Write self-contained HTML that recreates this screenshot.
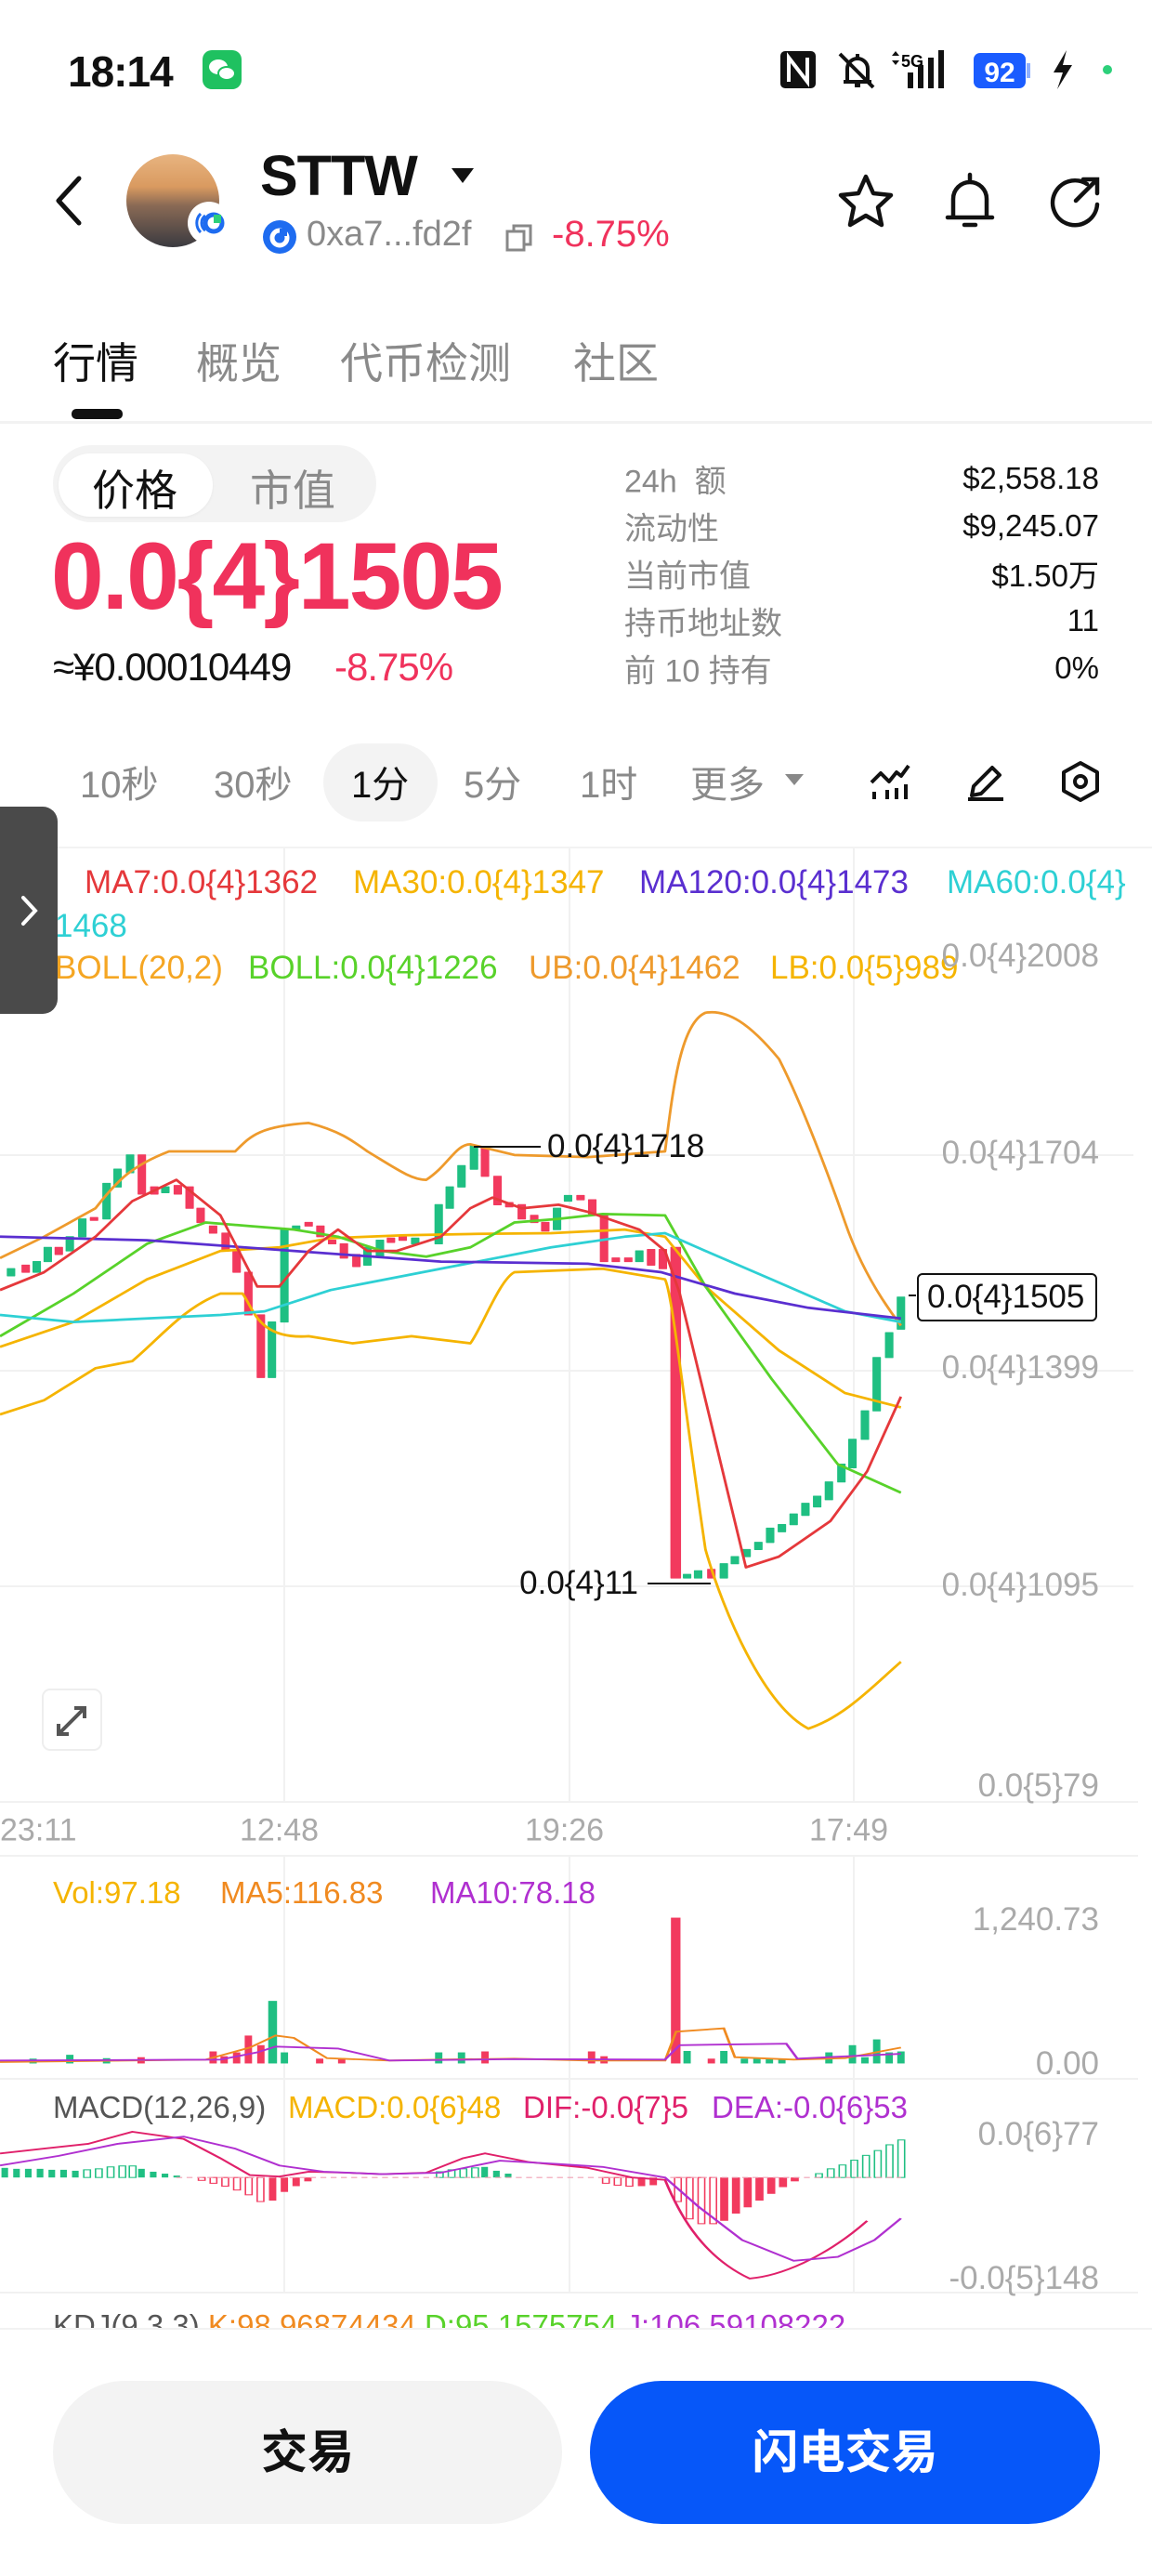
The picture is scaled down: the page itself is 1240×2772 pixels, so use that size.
<!DOCTYPE html>
<html><head><meta charset="utf-8">
<style>
*{margin:0;padding:0;box-sizing:border-box}
html,body{width:1240px;height:2772px;background:#fff;overflow:hidden}
body{position:relative;font-family:"Liberation Sans","Noto Sans CJK SC",sans-serif;color:#111}
.a{position:absolute;white-space:nowrap}
.g{color:#8a8a8a}
.red{color:#f0325c}
.lbl{position:absolute;left:672px;font-size:34px;color:#8a8a8a;transform:translateY(-50%)}
.val{position:absolute;right:57px;font-size:33px;color:#111;transform:translateY(-50%)}
.tf{position:absolute;top:841px;transform:translateY(-50%);font-size:40px;color:#8a8a8a}
.ax{position:absolute;right:57px;font-size:35px;color:#aaa;transform:translateY(-50%)}
.lg{position:absolute;font-size:35px;transform:translateY(-50%)}
.sm{font-size:33px}
</style></head><body>

<!-- status bar -->
<div class="a" style="left:73px;top:50px;font-size:46px;font-weight:bold;letter-spacing:-1px">18:14</div>
<div class="a" style="left:218px;top:54px;width:42px;height:42px;border-radius:10px;background:#1fc160">
<svg width="42" height="42" viewBox="0 0 42 42"><ellipse cx="17" cy="18" rx="10" ry="8" fill="#fff"/><ellipse cx="26" cy="25" rx="9" ry="7" fill="#fff" stroke="#1fc160" stroke-width="2"/></svg></div>
<svg class="a" style="left:830px;top:50px" width="380" height="50" viewBox="0 0 380 50">
<rect x="10" y="5" width="38" height="40" rx="5" fill="#111"/><path d="M19 38V12l20 26V12" stroke="#fff" stroke-width="4" fill="none"/>
<path d="M78 38h30M82 38V24a11 11 0 0 1 22 0v14M93 8v4M90 42h6" stroke="#111" stroke-width="4" fill="none"/><path d="M74 8l36 36" stroke="#111" stroke-width="4"/>
<text x="140" y="22" font-size="18" font-weight="bold" font-family="Liberation Sans">5G</text><path d="M130 10l4-5 4 5M130 15l4 5 4-5" fill="#111"/>
<rect x="147" y="28" width="6" height="17" fill="#111"/><rect x="158" y="20" width="6" height="25" fill="#111"/><rect x="169" y="12" width="6" height="33" fill="#111"/><rect x="180" y="4" width="6" height="41" fill="#111"/>
<rect x="218" y="7" width="56" height="38" rx="7" fill="#1a5cff"/><rect x="275" y="18" width="4" height="16" fill="#8fb0ff"/>
<text x="246" y="38" font-size="30" font-weight="bold" fill="#fff" text-anchor="middle" font-family="Liberation Sans">92</text>
<path d="M318 4l-14 24h10l-6 18 16-26h-10z" fill="#111"/>
<circle cx="362" cy="25" r="5" fill="#2dd07a"/></svg>

<!-- header -->
<svg class="a" style="left:55px;top:188px" width="40" height="56" viewBox="0 0 40 56"><path d="M30 4L8 28l22 24" stroke="#111" stroke-width="5" fill="none" stroke-linecap="round" stroke-linejoin="round"/></svg>
<div class="a" style="left:136px;top:166px;width:100px;height:100px;border-radius:50%;background:linear-gradient(#e8b480 0%,#d99a60 35%,#8a6a55 55%,#3a3a40 100%)"></div>
<div class="a" style="left:202px;top:217px;width:46px;height:46px;border-radius:50%;background:#fff"><svg width="46" height="46" viewBox="0 0 46 46"><path d="M14 13a14 14 0 0 0 0 20M19 15a10 10 0 0 0 0 16" stroke="#1e6cf0" stroke-width="3" fill="none"/><circle cx="28" cy="23" r="9" fill="none" stroke="#1e6cf0" stroke-width="5"/><rect x="28" y="14" width="8" height="9" fill="#2dd07a"/></svg></div>
<div class="a" style="left:280px;top:154px;font-size:61px;font-weight:bold;letter-spacing:-1px">STTW</div>
<svg class="a" style="left:486px;top:181px" width="24" height="18"><path d="M0 0h24L12 16z" fill="#111"/></svg>
<svg class="a" style="left:282px;top:236px" width="38" height="38"><circle cx="19" cy="19" r="18" fill="#1e6cf0"/><circle cx="19" cy="20" r="8" fill="none" stroke="#fff" stroke-width="5"/><rect x="19" y="10" width="8" height="8" fill="#1e6cf0"/></svg>
<div class="a g" style="left:330px;top:231px;font-size:38px">0xa7...fd2f</div>
<svg class="a" style="left:543px;top:240px" width="32" height="32"><rect x="3" y="9" width="18" height="20" fill="none" stroke="#888" stroke-width="3"/><path d="M10 9V3h18v20h-7" fill="none" stroke="#888" stroke-width="3"/></svg>
<div class="a red" style="left:594px;top:230px;font-size:40px">-8.75%</div>
<svg class="a" style="left:900px;top:186px" width="64" height="60" viewBox="0 0 64 60"><path d="M32 4l8 18 19 2-14 13 4 19-17-10-17 10 4-19L5 24l19-2z" fill="none" stroke="#111" stroke-width="4.5" stroke-linejoin="round"/></svg>
<svg class="a" style="left:1014px;top:184px" width="60" height="64" viewBox="0 0 60 64"><path d="M6 50h48M12 50V30a18 18 0 0 1 36 0v20M30 4v8M24 58h12" stroke="#111" stroke-width="4.5" fill="none" stroke-linecap="round"/></svg>
<svg class="a" style="left:1128px;top:188px" width="58" height="58" viewBox="0 0 58 58"><path d="M42 10A24 24 0 1 0 53 32" stroke="#111" stroke-width="4.5" fill="none" stroke-linecap="round"/><path d="M30 28L52 6M38 5h15v15" stroke="#111" stroke-width="4.5" fill="none" stroke-linecap="round"/></svg>

<!-- tabs -->
<div class="a" style="left:57px;top:355px;font-size:46px;color:#111">行情</div>
<div class="a g" style="left:211px;top:355px;font-size:46px">概览</div>
<div class="a g" style="left:366px;top:355px;font-size:46px">代币检测</div>
<div class="a g" style="left:617px;top:355px;font-size:46px">社区</div>
<div class="a" style="left:77px;top:440px;width:55px;height:11px;border-radius:5px;background:#111"></div>
<div class="a" style="left:0;top:453px;width:1240px;height:3px;background:#f2f2f2"></div>

<!-- price block -->
<div class="a" style="left:57px;top:479px;width:348px;height:83px;border-radius:42px;background:#f3f3f3"></div>
<div class="a" style="left:63px;top:488px;width:166px;height:68px;border-radius:34px;background:#fff;box-shadow:0 1px 3px rgba(0,0,0,.05)"></div>
<div class="a" style="left:99px;top:492px;font-size:46px;color:#111">价格</div>
<div class="a g" style="left:269px;top:492px;font-size:46px">市值</div>
<div class="a red" style="left:55px;top:562px;font-size:102px;font-weight:bold;letter-spacing:-2px">0.0{4}1505</div>
<div class="a" style="left:57px;top:694px;font-size:42px;letter-spacing:-1px">≈¥0.00010449</div>
<div class="a red" style="left:360px;top:694px;font-size:42px;letter-spacing:-1px">-8.75%</div>

<div class="lbl" style="top:515px">24h&nbsp; 额</div><div class="val" style="top:515px">$2,558.18</div>
<div class="lbl" style="top:566px">流动性</div><div class="val" style="top:566px">$9,245.07</div>
<div class="lbl" style="top:617px">当前市值</div><div class="val" style="top:617px">$1.50万</div>
<div class="lbl" style="top:668px">持币地址数</div><div class="val" style="top:668px">11</div>
<div class="lbl" style="top:719px">前 10 持有</div><div class="val" style="top:719px">0%</div>

<!-- timeframes -->
<div class="a" style="left:348px;top:800px;width:123px;height:84px;border-radius:42px;background:#f3f3f3"></div>
<div class="tf" style="left:86px">10秒</div>
<div class="tf" style="left:230px">30秒</div>
<div class="tf" style="left:378px;color:#111">1分</div>
<div class="tf" style="left:499px">5分</div>
<div class="tf" style="left:624px">1时</div>
<div class="tf" style="left:743px">更多</div>
<svg class="a" style="left:845px;top:833px" width="20" height="14"><path d="M0 0h20L10 12z" fill="#888"/></svg>
<svg class="a" style="left:935px;top:818px" width="46" height="46" viewBox="0 0 46 46"><path d="M3 24l10-10 9 9 8-10 5 4 8-11" stroke="#111" stroke-width="4" fill="none" stroke-linejoin="round"/><path d="M6 42v-8M20 42V32M30 42V30M40 42V26" stroke="#111" stroke-width="4"/></svg>
<svg class="a" style="left:1038px;top:818px" width="46" height="46" viewBox="0 0 46 46"><path d="M8 38l2-10 20-20 8 8-20 20zM4 42h38" stroke="#111" stroke-width="4" fill="none" stroke-linejoin="round"/></svg>
<svg class="a" style="left:1140px;top:818px" width="46" height="46" viewBox="0 0 46 46"><path d="M23 3l18 10v20L23 43 5 33V13z" stroke="#111" stroke-width="4" fill="none" stroke-linejoin="round"/><circle cx="23" cy="23" r="6" stroke="#111" stroke-width="4" fill="none"/></svg>

<div class="a" style="left:0;top:911px;width:1240px;height:2px;background:#f3f3f3"></div>

<!-- chart grid & lines -->
<svg class="a" style="left:0;top:0" width="1240" height="2772">
<g stroke="#f1f1f1" stroke-width="2">
<line x1="0" y1="1243" x2="1220" y2="1243"/><line x1="0" y1="1475" x2="1220" y2="1475"/><line x1="0" y1="1707" x2="1220" y2="1707"/>
<line x1="0" y1="1939" x2="1225" y2="1939"/><line x1="0" y1="1997" x2="1225" y2="1997"/><line x1="0" y1="2237" x2="1225" y2="2237"/><line x1="0" y1="2467" x2="1225" y2="2467"/>
<line x1="306" y1="913" x2="306" y2="1939"/><line x1="613" y1="913" x2="613" y2="1939"/><line x1="919" y1="913" x2="919" y2="1939"/>
<line x1="306" y1="1997" x2="306" y2="2467"/><line x1="613" y1="1997" x2="613" y2="2467"/><line x1="919" y1="1997" x2="919" y2="2467"/>
</g>
<g transform="matrix(0.791 0 0 0.765 0 780)" fill="none" stroke-width="3.6" stroke-linejoin="round">
<g stroke-width="1.5">
<g fill="#1fbf82" stroke="#1fbf82">
<rect x="10" y="765" width="10" height="10"/><rect x="45" y="755" width="10" height="15"/><rect x="60" y="735" width="10" height="20"/><rect x="90" y="720" width="10" height="20"/><rect x="107" y="695" width="10" height="25"/><rect x="140" y="645" width="10" height="50"/><rect x="155" y="625" width="10" height="25"/><rect x="172" y="605" width="10" height="25"/><rect x="220" y="650" width="10" height="8"/><rect x="365" y="840" width="10" height="78"/><rect x="382" y="710" width="10" height="130"/><rect x="398" y="705" width="10" height="5"/><rect x="495" y="735" width="10" height="25"/><rect x="512" y="725" width="10" height="23"/><rect x="560" y="722" width="10" height="8"/><rect x="592" y="675" width="10" height="55"/><rect x="607" y="650" width="10" height="30"/><rect x="623" y="620" width="10" height="30"/><rect x="640" y="592" width="10" height="33"/><rect x="753" y="680" width="10" height="30"/><rect x="768" y="662" width="10" height="8"/><rect x="865" y="740" width="10" height="15"/>
<rect x="930" y="1195" width="10" height="5"/><rect x="945" y="1190" width="10" height="10"/><rect x="980" y="1180" width="10" height="20"/><rect x="995" y="1170" width="10" height="10"/><rect x="1011" y="1160" width="10" height="10"/><rect x="1027" y="1150" width="10" height="10"/><rect x="1043" y="1130" width="10" height="20"/><rect x="1059" y="1125" width="10" height="10"/><rect x="1075" y="1110" width="10" height="15"/><rect x="1091" y="1095" width="10" height="17"/><rect x="1107" y="1085" width="10" height="15"/><rect x="1123" y="1065" width="10" height="25"/><rect x="1140" y="1040" width="10" height="25"/><rect x="1155" y="1005" width="10" height="40"/><rect x="1172" y="965" width="10" height="40"/><rect x="1188" y="890" width="10" height="75"/><rect x="1205" y="855" width="10" height="35"/><rect x="1221" y="805" width="10" height="45"/>
</g>
<g fill="#f23a5e" stroke="#f23a5e">
<rect x="30" y="760" width="10" height="10"/><rect x="75" y="735" width="10" height="10"/><rect x="123" y="693" width="10" height="4"/><rect x="188" y="605" width="10" height="55"/><rect x="205" y="650" width="10" height="10"/><rect x="237" y="648" width="10" height="12"/><rect x="253" y="650" width="10" height="30"/><rect x="268" y="680" width="10" height="20"/><rect x="285" y="705" width="10" height="10"/><rect x="302" y="715" width="10" height="25"/><rect x="317" y="740" width="10" height="30"/><rect x="333" y="770" width="10" height="60"/><rect x="350" y="830" width="10" height="88"/><rect x="415" y="700" width="10" height="5"/><rect x="431" y="705" width="10" height="15"/><rect x="447" y="725" width="10" height="5"/><rect x="463" y="730" width="10" height="20"/><rect x="480" y="745" width="10" height="17"/><rect x="527" y="722" width="10" height="6"/><rect x="543" y="720" width="10" height="5"/><rect x="655" y="595" width="10" height="40"/><rect x="672" y="635" width="10" height="40"/><rect x="688" y="672" width="10" height="6"/><rect x="705" y="675" width="10" height="20"/><rect x="722" y="690" width="10" height="10"/><rect x="737" y="700" width="10" height="12"/><rect x="785" y="662" width="10" height="6"/><rect x="801" y="668" width="10" height="22"/><rect x="817" y="690" width="10" height="65"/><rect x="833" y="750" width="10" height="5"/><rect x="850" y="750" width="10" height="5"/><rect x="881" y="738" width="10" height="22"/><rect x="897" y="738" width="10" height="27"/><rect x="913" y="735" width="13" height="465"/><rect x="963" y="1188" width="10" height="12"/>
</g></g>
<path stroke="#ee9a2c" d="M0 750L60 720 130 680C160 640 180 620 230 600L320 600C340 580 350 565 420 560 460 570 480 585 500 600 540 625 560 640 580 640 610 620 620 590 640 590L700 605 800 608 905 600C915 520 925 420 960 405 990 400 1020 420 1060 470 1090 530 1130 640 1150 700 1170 760 1200 810 1226 845"/>
<path stroke="#f5b400" d="M0 970L60 950 130 905 180 895C220 860 250 820 300 800L330 800C345 820 350 865 420 860L480 870 560 860 640 870C655 850 680 780 700 770L820 765 905 780C915 800 930 950 960 1160 985 1250 1040 1380 1100 1412 1150 1395 1190 1350 1226 1318"/>
<path stroke="#f5b400" d="M0 875L100 840 200 780 300 740 380 735 450 722 550 718 650 716 750 715 850 710 905 720 960 790 1060 880 1150 940 1226 960"/>
<path stroke="#58d22a" d="M0 860L100 800 200 730 280 700 340 705 400 710 460 720 520 740 580 748 640 735 700 700 760 695 820 688 905 690 960 790 1050 920 1140 1040 1226 1080"/>
<path stroke="#2ed0d4" d="M0 830L100 840 200 835 300 830 360 825 450 795 550 775 650 755 750 735 850 720 905 715 960 740 1050 780 1150 825 1226 840"/>
<path stroke="#5a2fd0" d="M0 720L200 725 400 740 600 755 800 758 900 770 1000 800 1100 820 1226 835"/>
<path stroke="#e5383b" d="M0 795L60 770 130 720 180 670 240 640 300 690 330 750 350 790 380 790 420 740 460 710 500 740 540 740 600 720 640 680 670 665 710 680 760 675 800 685 870 710 905 740 925 800 1015 1185 1060 1170 1130 1120 1180 1050 1226 945"/>
</g>
<g stroke="#111" stroke-width="2"><line x1="510" y1="1234" x2="582" y2="1234"/><line x1="697" y1="1704" x2="765" y2="1704"/><line x1="978" y1="1394" x2="986" y2="1394"/></g>
<rect x="988" y="1371" width="192" height="50" rx="5" fill="#fff" stroke="#111" stroke-width="2"/>
<rect x="46" y="1818" width="63" height="65" rx="8" fill="#fff" stroke="#eee" stroke-width="2"/>
<path d="M63 1866l28-28M80 1838h11v11M63 1855v11h11" stroke="#555" stroke-width="4" fill="none"/>

<!-- volume / macd -->
<g transform="matrix(0.791 0 0 0.5178 0 1960)" stroke-width="3.6" fill="none">
<g stroke="none" fill="#1fbf82">
<rect x="40" y="493" width="10" height="10"/><rect x="90" y="485" width="10" height="18"/><rect x="140" y="492" width="10" height="11"/><rect x="365" y="373" width="12" height="130"/><rect x="382" y="480" width="10" height="23"/><rect x="592" y="480" width="10" height="23"/><rect x="623" y="480" width="10" height="23"/><rect x="930" y="477" width="10" height="26"/><rect x="980" y="477" width="10" height="26"/><rect x="1008" y="493" width="10" height="10"/><rect x="1025" y="493" width="10" height="10"/><rect x="1042" y="493" width="10" height="10"/><rect x="1059" y="493" width="10" height="10"/><rect x="1123" y="480" width="10" height="23"/><rect x="1155" y="465" width="10" height="38"/><rect x="1172" y="490" width="10" height="13"/><rect x="1188" y="453" width="10" height="50"/><rect x="1205" y="480" width="10" height="23"/><rect x="1221" y="478" width="10" height="25"/>
</g>
<g stroke="none" fill="#f23a5e">
<rect x="187" y="490" width="10" height="13"/><rect x="285" y="478" width="10" height="25"/><rect x="300" y="488" width="10" height="15"/><rect x="317" y="480" width="10" height="23"/><rect x="333" y="445" width="10" height="58"/><rect x="350" y="465" width="10" height="38"/><rect x="430" y="493" width="10" height="10"/><rect x="460" y="492" width="10" height="11"/><rect x="655" y="478" width="10" height="25"/><rect x="800" y="478" width="10" height="25"/><rect x="817" y="488" width="10" height="15"/><rect x="913" y="200" width="13" height="303"/><rect x="963" y="493" width="10" height="10"/>
</g>
<path stroke="#f08a20" d="M0 500L280 495 340 470 375 445 400 450 445 492 530 497 600 495 700 493 800 497 905 497 920 437 985 430 1000 490 1080 495 1150 492 1226 470"/>
<path stroke="#b030d0" d="M0 497L300 495 350 480 375 468 460 472 530 497 700 494 905 495 925 465 1070 462 1085 493 1226 483"/>
<g stroke="none" fill="#1fbf82">
<rect x="2" y="720" width="9" height="20"/><rect x="18" y="722" width="9" height="18"/><rect x="34" y="722" width="9" height="18"/><rect x="50" y="722" width="9" height="18"/><rect x="66" y="724" width="9" height="16"/><rect x="82" y="724" width="9" height="16"/><rect x="98" y="726" width="9" height="14"/><rect x="188" y="722" width="9" height="18"/><rect x="204" y="728" width="9" height="12"/><rect x="220" y="732" width="9" height="8"/><rect x="236" y="736" width="9" height="4"/><rect x="655" y="718" width="9" height="22"/><rect x="671" y="726" width="9" height="14"/><rect x="687" y="732" width="9" height="8"/>
</g>
<g stroke="#1fbf82" stroke-width="2"><rect x="114" y="724" width="9" height="16"/><rect x="130" y="722" width="9" height="18"/><rect x="146" y="718" width="9" height="22"/><rect x="162" y="716" width="9" height="24"/><rect x="176" y="716" width="9" height="24"/><rect x="594" y="728" width="9" height="12"/><rect x="610" y="724" width="9" height="16"/><rect x="626" y="722" width="9" height="18"/><rect x="642" y="720" width="9" height="20"/>
<rect x="1110" y="732" width="9" height="8"/><rect x="1126" y="722" width="9" height="18"/><rect x="1142" y="714" width="9" height="26"/><rect x="1158" y="704" width="9" height="36"/><rect x="1174" y="694" width="9" height="46"/><rect x="1190" y="684" width="9" height="56"/><rect x="1206" y="672" width="9" height="68"/><rect x="1222" y="662" width="9" height="78"/></g>
<g stroke="#f23a5e" stroke-width="2"><rect x="270" y="740" width="9" height="6"/><rect x="286" y="740" width="9" height="12"/><rect x="302" y="740" width="9" height="18"/><rect x="318" y="740" width="9" height="26"/><rect x="334" y="740" width="9" height="36"/><rect x="350" y="740" width="9" height="50"/><rect x="820" y="740" width="9" height="12"/><rect x="836" y="740" width="9" height="16"/><rect x="852" y="740" width="9" height="18"/><rect x="918" y="740" width="9" height="50"/><rect x="934" y="740" width="9" height="86"/><rect x="950" y="740" width="9" height="96"/><rect x="966" y="740" width="9" height="96"/></g>
<g stroke="none" fill="#f23a5e"><rect x="366" y="740" width="10" height="48"/><rect x="382" y="740" width="10" height="30"/><rect x="398" y="740" width="10" height="18"/><rect x="414" y="740" width="10" height="8"/><rect x="868" y="740" width="10" height="18"/><rect x="884" y="740" width="10" height="16"/><rect x="980" y="740" width="11" height="90"/><rect x="996" y="740" width="11" height="75"/><rect x="1012" y="740" width="11" height="62"/><rect x="1028" y="740" width="11" height="48"/><rect x="1044" y="740" width="11" height="34"/><rect x="1060" y="740" width="11" height="20"/><rect x="1076" y="740" width="11" height="8"/></g>
<path stroke="#f0a0b4" stroke-width="2" stroke-dasharray="8 6" d="M240 740H1226"/>
<path stroke="#e0206a" d="M0 690L60 680 120 670 180 645 250 660 300 700 340 735 380 738 420 728 470 730 520 733 580 730 630 700 660 690 720 708 800 720 860 740 905 745C920 800 950 900 1020 950 1060 945 1120 910 1180 830 1226 748"/>
<path stroke="#b030d0" d="M0 715L80 695 160 670 250 655 320 680 380 715 440 728 520 733 600 730 680 705 760 712 820 718 905 740 950 800 1010 870 1080 913 1140 905 1190 870 1226 825"/>
</g>
</svg>

<!-- chart texts -->
<div class="lg" style="left:91px;top:950px;color:#e5383b">MA7:0.0{4}1362</div>
<div class="lg" style="left:380px;top:950px;color:#f5b400">MA30:0.0{4}1347</div>
<div class="lg" style="left:688px;top:950px;color:#5a2fd0">MA120:0.0{4}1473</div>
<div class="lg" style="left:1019px;top:950px;color:#2ed0d4">MA60:0.0{4}</div>
<div class="lg" style="left:59px;top:997px;color:#2ed0d4">1468</div>
<div class="lg" style="left:59px;top:1042px;color:#f5a623">BOLL(20,2)</div>
<div class="lg" style="left:267px;top:1042px;color:#58d22a">BOLL:0.0{4}1226</div>
<div class="lg" style="left:569px;top:1042px;color:#ee9a2c">UB:0.0{4}1462</div>
<div class="lg" style="left:829px;top:1042px;color:#f5b400">LB:0.0{5}989</div>
<div class="ax" style="top:1029px">0.0{4}2008</div>
<div class="ax" style="top:1241px">0.0{4}1704</div>
<div class="ax" style="top:1472px">0.0{4}1399</div>
<div class="ax" style="top:1706px">0.0{4}1095</div>
<div class="ax" style="top:1922px">0.0{5}79</div>
<div class="lg" style="left:589px;top:1234px;color:#111">0.0{4}1718</div>
<div class="lg" style="right:553px;top:1704px;color:#111">0.0{4}11</div>
<div class="lg" style="left:998px;top:1396px;color:#111">0.0{4}1505</div>
<div class="lg" style="left:0;top:1970px;color:#aaa;font-size:34px">23:11</div>
<div class="lg" style="left:258px;top:1970px;color:#aaa;font-size:34px">12:48</div>
<div class="lg" style="left:565px;top:1970px;color:#aaa;font-size:34px">19:26</div>
<div class="lg" style="left:871px;top:1970px;color:#aaa;font-size:34px">17:49</div>

<div class="lg sm" style="left:57px;top:2037px;color:#f5b400">Vol:97.18</div>
<div class="lg sm" style="left:237px;top:2037px;color:#f08a20">MA5:116.83</div>
<div class="lg sm" style="left:463px;top:2037px;color:#b030d0">MA10:78.18</div>
<div class="ax" style="top:2066px">1,240.73</div>
<div class="ax" style="top:2221px">0.00</div>
<div class="lg sm" style="left:57px;top:2268px;color:#555">MACD(12,26,9)</div>
<div class="lg sm" style="left:310px;top:2268px;color:#f5b400">MACD:0.0{6}48</div>
<div class="lg sm" style="left:563px;top:2268px;color:#e0206a">DIF:-0.0{7}5</div>
<div class="lg sm" style="left:766px;top:2268px;color:#b030d0">DEA:-0.0{6}53</div>
<div class="ax" style="top:2297px">0.0{6}77</div>
<div class="ax" style="top:2452px">-0.0{5}148</div>
<div class="a" style="left:57px;top:2484px;height:22px;overflow:hidden;font-size:33px;line-height:38px">
<span style="color:#555">KDJ(9,3,3)</span> <span style="color:#f08a20">K:98.96874434</span> <span style="color:#58d22a">D:95.1575754</span> <span style="color:#b030d0">J:106.59108222</span></div>
<div class="a" style="left:0;top:2505px;width:1240px;height:2px;background:#f2f2f2"></div>

<!-- side tab -->
<div class="a" style="left:0;top:868px;width:62px;height:223px;background:#4a4a4a;border-radius:0 16px 16px 0"></div>
<svg class="a" style="left:20px;top:962px" width="24" height="36"><path d="M5 4l13 14L5 32" stroke="#fff" stroke-width="4" fill="none" stroke-linecap="round"/></svg>

<!-- bottom buttons -->
<div class="a" style="left:57px;top:2562px;width:548px;height:154px;border-radius:77px;background:#f3f3f3;text-align:center;line-height:154px;font-size:50px;font-weight:bold;color:#111">交易</div>
<div class="a" style="left:635px;top:2562px;width:549px;height:154px;border-radius:77px;background:#0657f9;text-align:center;line-height:154px;font-size:50px;font-weight:bold;color:#fff">闪电交易</div>
</body></html>
